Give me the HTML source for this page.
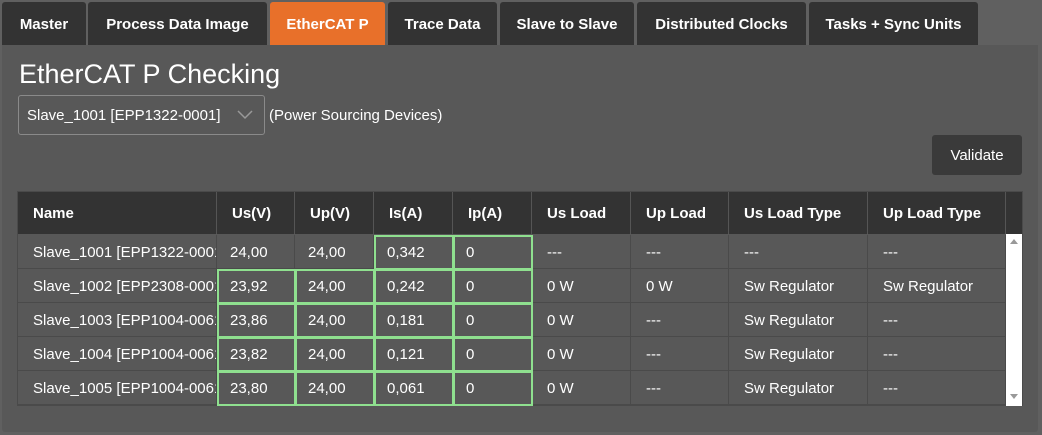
<!DOCTYPE html>
<html><head><style>
*{margin:0;padding:0;box-sizing:border-box}
body{width:1042px;height:435px;background:#606060;font-family:"Liberation Sans",sans-serif;color:#fff;position:relative;overflow:hidden}
.a{position:absolute}
.tab{position:absolute;top:2px;height:43px;background:#333;border-radius:3px 3px 0 0;font-weight:bold;font-size:15px;line-height:45px;text-align:center}
.panel{left:2px;top:45px;width:1036px;height:387px;background:#585858;border-radius:0 0 3px 3px}
.c{position:absolute;font-size:15px;padding-left:15px;white-space:nowrap;overflow:hidden}
.h{font-weight:bold;background:#333;border-right:1px solid #555;height:42px;line-height:43px;top:192px}
.r{height:34px;line-height:36px;border-right:1px solid #4a4a4a;border-bottom:1px solid #4a4a4a}
.g{outline:2px solid #8fe08f;outline-offset:-2px;z-index:2}
</style></head><body>
<div class="tab" style="left:2px;width:84px">Master</div>
<div class="tab" style="left:88px;width:179px">Process Data Image</div>
<div class="tab" style="left:270px;width:115px;background:#e8702a">EtherCAT P</div>
<div class="tab" style="left:388px;width:109px">Trace Data</div>
<div class="tab" style="left:500px;width:134px">Slave to Slave</div>
<div class="tab" style="left:637px;width:169px">Distributed Clocks</div>
<div class="tab" style="left:809px;width:169px">Tasks + Sync Units</div>
<div class="a panel"></div>
<div class="a" style="left:19px;top:57px;font-size:27px;line-height:34px">EtherCAT P Checking</div>
<div class="a" style="left:18px;top:95px;width:247px;height:40px;border:1px solid #8a8a8a;border-radius:3px;font-size:15px;line-height:40px;padding-left:8px">Slave_1001 [EPP1322-0001]
<svg class="a" style="left:218px;top:14px" width="16" height="10"><path d="M1 1l7 7 7-7" stroke="#999" stroke-width="1.5" fill="none"/></svg></div>
<div class="a" style="left:269px;top:107px;font-size:15px">(Power Sourcing Devices)</div>
<div class="a" style="left:932px;top:135px;width:90px;height:40px;background:#3a3a3a;border-radius:3px;font-size:15px;line-height:42px;text-align:center">Validate</div>
<div class="a" style="left:17px;top:191px;width:1006px;height:215px;border:1px solid #4a4a4a"></div>
<div class="a" style="left:1006px;top:192px;width:16px;height:42px;background:#333"></div>
<div class="a" style="left:1006px;top:234px;width:16px;height:172px;background:#fff"></div>
<svg class="a" style="left:1009px;top:238px" width="10" height="8"><path d="M5 1L9 6H1z" fill="#999"/></svg>
<svg class="a" style="left:1009px;top:393px" width="10" height="8"><path d="M1 1H9L5 6z" fill="#999"/></svg>
<div id="t"></div>
<script>
var x=[18,217,295,374,453,532,631,729,868,1006];
var hd=["Name","Us(V)","Up(V)","Is(A)","Ip(A)","Us Load","Up Load","Us Load Type","Up Load Type"];
var rows=[["Slave_1001 [EPP1322-0001]","24,00","24,00","0,342","0","---","---","---","---"],
["Slave_1002 [EPP2308-0001]","23,92","24,00","0,242","0","0 W","0 W","Sw Regulator","Sw Regulator"],
["Slave_1003 [EPP1004-0061]","23,86","24,00","0,181","0","0 W","---","Sw Regulator","---"],
["Slave_1004 [EPP1004-0061]","23,82","24,00","0,121","0","0 W","---","Sw Regulator","---"],
["Slave_1005 [EPP1004-0061]","23,80","24,00","0,061","0","0 W","---","Sw Regulator","---"]];
var h="";
for(var i=0;i<9;i++){h+='<div class="c h" style="left:'+x[i]+'px;width:'+(x[i+1]-x[i])+'px">'+hd[i]+'</div>';}
for(var r=0;r<5;r++){for(var i=0;i<9;i++){
var g=(r==0?(i==3||i==4):(i>=1&&i<=4));
var pl=i==0?15:(i<5?13:15);
h+='<div class="c r'+(g?' g':'')+'" style="left:'+x[i]+'px;top:'+(235+r*34)+'px;width:'+(x[i+1]-x[i]+(g?1:0))+'px;height:'+(34+(g?1:0))+'px;padding-left:'+pl+'px">'+rows[r][i]+'</div>';}}
document.getElementById("t").innerHTML=h;
</script>
</body></html>
